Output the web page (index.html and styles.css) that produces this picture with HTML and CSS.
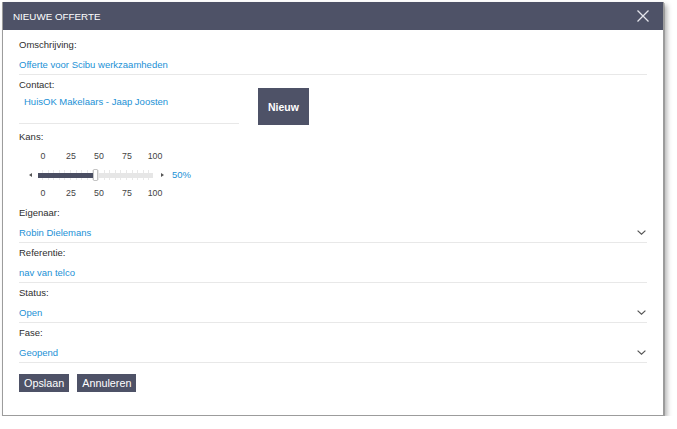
FILE: index.html
```html
<!DOCTYPE html>
<html>
<head>
<meta charset="utf-8">
<link rel="stylesheet" href="styles.css">
</head>
<body>
<div class="dialog">
  <div class="header">
    <span class="title">NIEUWE OFFERTE</span>
    <svg class="close" width="12" height="12" viewBox="0 0 12 12"><path d="M0.5 0.5L11.5 11.5M11.5 0.5L0.5 11.5" stroke="#e4e5ec" stroke-width="1.3" fill="none"/></svg>
  </div>
  <div class="body">
    <div class="field first">
      <div class="label">Omschrijving:</div>
      <div class="value">Offerte voor Scibu werkzaamheden</div>
    </div>

    <div class="contact-row">
      <div class="contact-col">
        <div class="label">Contact:</div>
        <div class="value contact-value">HuisOK Makelaars - Jaap Joosten</div>
      </div>
      <div class="btn-new">Nieuw</div>
    </div>

    <div class="kans">
      <div class="label">Kans:</div>
      <div class="ticks-labels"><span>0</span><span>25</span><span>50</span><span>75</span><span>100</span></div>
      <div class="slider">
        <span class="arrow-left"></span>
        <div class="track-wrap">
          <div class="track"><div class="fill"></div></div>
          <div class="handle"></div>
        </div>
        <span class="arrow-right"></span>
        <span class="pct">50%</span>
      </div>
      <div class="ticks-labels bottom"><span>0</span><span>25</span><span>50</span><span>75</span><span>100</span></div>
    </div>

    <div class="field">
      <div class="label">Eigenaar:</div>
      <div class="value select"><span>Robin Dielemans</span><svg class="chev" width="9" height="5" viewBox="0 0 9 5"><path d="M0.6 0.6L4.5 4.2L8.4 0.6" stroke="#555" stroke-width="1.2" fill="none"/></svg></div>
    </div>
    <div class="field">
      <div class="label">Referentie:</div>
      <div class="value">nav van telco</div>
    </div>
    <div class="field">
      <div class="label">Status:</div>
      <div class="value select"><span>Open</span><svg class="chev" width="9" height="5" viewBox="0 0 9 5"><path d="M0.6 0.6L4.5 4.2L8.4 0.6" stroke="#555" stroke-width="1.2" fill="none"/></svg></div>
    </div>
    <div class="field">
      <div class="label">Fase:</div>
      <div class="value select"><span>Geopend</span><svg class="chev" width="9" height="5" viewBox="0 0 9 5"><path d="M0.6 0.6L4.5 4.2L8.4 0.6" stroke="#555" stroke-width="1.2" fill="none"/></svg></div>
    </div>

    <div class="actions">
      <span class="btn">Opslaan</span>
      <span class="btn">Annuleren</span>
    </div>
  </div>
</div>
</body>
</html>
```

FILE: styles.css
```css
html, body {
  margin: 0;
  padding: 0;
  background: #ffffff;
}
body {
  font-family: "Liberation Sans", Arial, sans-serif;
  font-size: 9.5px;
  color: #333333;
}
.dialog {
  margin: 2px 0 0 2px;
  width: 662px;
  height: 414px;
  box-sizing: border-box;
  border: 1px solid #9c9c9c;
  border-top: none;
  background: #ffffff;
  box-shadow: 3px 3px 5px rgba(0, 0, 0, 0.3), 1px 1px 0 #d0d0d0;
}
.header {
  height: 28px;
  background: #4e5267;
  display: flex;
  align-items: center;
  justify-content: space-between;
  padding: 0 14px 0 10px;
}
.title {
  color: #ffffff;
  font-size: 9.8px;
}
.close {
  display: block;
}
.body {
  padding: 8px 16px 0 16px;
}
.label {
  line-height: 14px;
  color: #2e2e2e;
}
.value {
  line-height: 14px;
  color: #2391d6;
}
.field {
  border-bottom: 1px solid #e8e8e8;
  margin-bottom: 3px;
}
.field .value {
  margin-top: 6px;
  padding-bottom: 2px;
}
.select {
  display: flex;
  align-items: center;
  justify-content: space-between;
}
.chev {
  display: block;
  margin-right: 1px;
  margin-top: -1px;
}
.contact-row {
  display: flex;
  align-items: flex-end;
  margin-top: 1px;
}
.contact-col {
  width: 220px;
  border-bottom: 1px solid #e8e8e8;
}
.contact-value {
  margin-top: 3px;
  padding: 0 0 14px 5px;
}
.btn-new {
  width: 51px;
  height: 37px;
  margin-left: 19px;
  margin-bottom: -1px;
  background: #4e5267;
  color: #ffffff;
  font-weight: bold;
  font-size: 10.5px;
  display: flex;
  align-items: center;
  justify-content: center;
}
.kans {
  margin-top: 6px;
  margin-bottom: 7px;
}
.ticks-labels {
  display: flex;
  margin-top: 7px;
  margin-left: 10px;
  line-height: 11px;
  font-size: 8.8px;
  color: #444444;
}
.ticks-labels span {
  width: 28px;
  text-align: center;
}
.slider {
  display: flex;
  align-items: center;
  height: 12px;
  margin-top: 7px;
}
.arrow-left {
  margin-left: 10px;
  width: 0;
  height: 0;
  border-top: 2.5px solid transparent;
  border-bottom: 2.5px solid transparent;
  border-right: 3px solid #555555;
}
.arrow-right {
  margin-left: 8px;
  width: 0;
  height: 0;
  border-top: 2.5px solid transparent;
  border-bottom: 2.5px solid transparent;
  border-left: 3px solid #555555;
}
.track-wrap {
  position: relative;
  width: 115px;
  height: 12px;
  margin-left: 6px;
  display: flex;
  align-items: center;
  background-image:
    repeating-linear-gradient(to right, #e8e8e8 0, #e8e8e8 1px, transparent 1px, transparent 5.6px);
  background-position: 4px 1px;
  background-size: 112px 10px;
  background-repeat: no-repeat;
}
.track {
  width: 100%;
  height: 5px;
  background: #e6e6e6;
}
.fill {
  width: 55px;
  height: 5px;
  background: #4a4e62;
}
.handle {
  position: absolute;
  left: 55px;
  top: 0;
  width: 3px;
  height: 10px;
  background: #ffffff;
  border: 1px solid #c4c4c4;
  border-radius: 1px;
}
.pct {
  margin-left: 8px;
  color: #2391d6;
  line-height: 12px;
}
.actions {
  display: flex;
  gap: 8px;
  margin-top: 11px;
}
.btn {
  height: 18px;
  line-height: 18px;
  padding: 0 5px;
  background: #4e5267;
  color: #ffffff;
  font-size: 10.8px;
}
```
